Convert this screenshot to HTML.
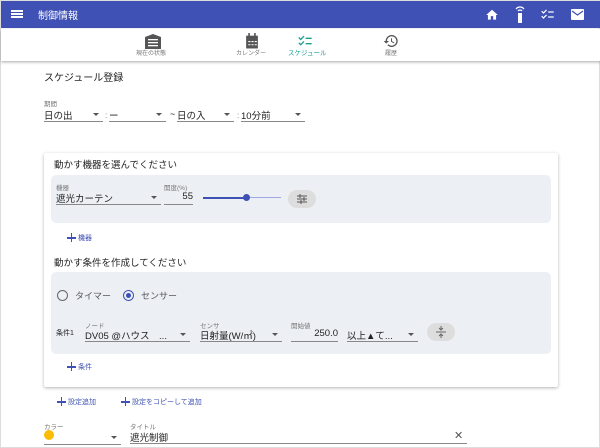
<!DOCTYPE html>
<html><head><meta charset="utf-8"><style>
*{box-sizing:border-box;margin:0;padding:0}
body{width:600px;height:448px;overflow:hidden;background:#fff;font-family:"Liberation Sans","Noto Sans CJK JP",sans-serif;color:#222;position:relative;border:1px solid #ddd}
.a{position:absolute;white-space:nowrap}
.hdr{left:0;top:0;width:600px;height:27px;background:#3f51b5}
.tabs{left:0;top:28px;width:600px;height:32px;background:#fff;box-shadow:0 1px 3px rgba(0,0,0,.35)}
.lbl{font-size:6.5px;color:#777}
.sel{font-size:9.5px;border-bottom:1px solid #888;height:14px}
.arr{position:absolute;right:4px;top:5px;width:0;height:0;border-left:3px solid transparent;border-right:3px solid transparent;border-top:3px solid #555}
.card{left:43px;top:152px;width:514px;height:234px;background:#fff;box-shadow:0 1px 3px rgba(0,0,0,.3);border-radius:2px}
.pan{background:#eceff4;border-radius:5px}
.blue{color:#3f51b5;font-size:7px}
.plus{position:absolute;width:9px;height:9px}
.plus:before{content:"";position:absolute;left:0;top:4px;width:9px;height:1.5px;background:#3f51b5}
.plus:after{content:"";position:absolute;left:3.75px;top:0;width:1.5px;height:9px;background:#3f51b5}
.pill{background:#ddd;border-radius:9px;width:28px;height:18px}
</style></head><body>
<div class="a hdr"></div>
<div class="a" style="left:10px;top:9px;width:12px;height:2px;background:#fff;box-shadow:0 3px 0 #fff,0 6px 0 #fff"></div>
<div class="a" style="left:37px;top:6px;color:#fff;font-size:10px">制御情報</div>
<svg class="a" style="left:484px;top:7px" width="14" height="14" viewBox="0 0 24 24"><path d="M10 20v-6h4v6h5v-8h3L12 3 2 12h3v8z" fill="#fff"/></svg>
<svg class="a" style="left:514px;top:5px" width="10" height="17" viewBox="0 0 10 17"><path d="M1 3a5 5 0 0 1 8 0M3 5a2.5 2.5 0 0 1 4 0" stroke="#fff" fill="none" stroke-width="1.2"/><rect x="3" y="7" width="4" height="10" fill="#fff"/></svg>
<svg class="a" style="left:539px;top:6px" width="15" height="15" viewBox="0 0 24 24"><path d="M22 7h-9v2h9V7zm0 8h-9v2h9v-2zM5.54 11L2 7.46l1.41-1.41 2.12 2.12 4.24-4.24 1.41 1.41L5.54 11zm0 8L2 15.46l1.41-1.41 2.12 2.12 4.24-4.24 1.41 1.41L5.54 19z" fill="#fff"/></svg>
<svg class="a" style="left:570px;top:8px" width="13" height="11" viewBox="0 0 13 11"><rect width="13" height="11" rx="1" fill="#fff"/><path d="M1 2l5.5 4L12 2" stroke="#3f51b5" fill="none" stroke-width="1.2"/></svg>
<div class="a tabs"></div>
<svg class="a" style="left:143px;top:32px" width="18" height="16" viewBox="0 0 18 16"><path d="M1 4L9 1l8 3v12H1z" fill="#555"/><rect x="4" y="6" width="10" height="1.3" fill="#fff"/><rect x="4" y="9" width="10" height="1.3" fill="#fff"/><rect x="4" y="12" width="10" height="1.3" fill="#fff"/></svg>
<div class="a lbl" style="left:135px;top:47px;font-size:6px">現在の状態</div>
<svg class="a" style="left:244px;top:32px" width="14" height="16" viewBox="0 0 13 15"><rect x="1" y="2.5" width="11" height="12" fill="#555"/><rect x="3" y="0" width="1.5" height="3" fill="#555"/><rect x="8.5" y="0" width="1.5" height="3" fill="#555"/><path d="M3 8h2M6 8h2M9 8h2M3 11h2M6 11h2M9 11h2" stroke="#fff"/></svg>
<div class="a lbl" style="left:235px;top:47px;font-size:6px">カレンダー</div>
<svg class="a" style="left:296px;top:32px" width="16" height="16" viewBox="0 0 24 24"><path d="M22 7h-9v2h9V7zm0 8h-9v2h9v-2zM5.54 11L2 7.46l1.41-1.41 2.12 2.12 4.24-4.24 1.41 1.41L5.54 11zm0 8L2 15.46l1.41-1.41 2.12 2.12 4.24-4.24 1.41 1.41L5.54 19z" fill="#1a9e8f"/></svg>
<div class="a" style="left:287px;top:46px;font-size:6.5px;color:#1a9e8f">スケジュール</div>
<svg class="a" style="left:382px;top:32px" width="16" height="16" viewBox="0 0 24 24"><path d="M13 3a9 9 0 0 0-9 9H1l3.9 3.9L9 12H6a7 7 0 1 1 2 4.9l-1.4 1.4A9 9 0 1 0 13 3zm-1 5v5l4.3 2.5.7-1.2-3.5-2.1V8z" fill="#555"/></svg>
<div class="a lbl" style="left:384px;top:47px;font-size:6px">履歴</div>
<div class="a" style="left:43px;top:68px;font-size:10px">スケジュール登録</div>
<div class="a lbl" style="left:43px;top:97px">期間</div>
<div class="a sel" style="left:43px;top:107px;width:59px">日の出<span class="arr"></span></div>
<div class="a" style="left:104px;top:110px;font-size:8px;color:#777">:</div>
<div class="a sel" style="left:108px;top:107px;width:57px">ー<span class="arr"></span></div>
<div class="a" style="left:169px;top:108px;font-size:9px">~</div>
<div class="a sel" style="left:176px;top:107px;width:57px">日の入<span class="arr"></span></div>
<div class="a" style="left:236px;top:110px;font-size:8px;color:#777">:</div>
<div class="a sel" style="left:240px;top:107px;width:64px">10分前<span class="arr"></span></div>
<div class="a card"></div>
<div class="a" style="left:53px;top:156px;font-size:9.5px">動かす機器を選んでください</div>
<div class="a pan" style="left:50px;top:174px;width:500px;height:48px"></div>
<div class="a lbl" style="left:55px;top:181px">機器</div>
<div class="a sel" style="left:55px;top:190px;width:105px">遮光カーテン<span class="arr"></span></div>
<div class="a lbl" style="left:163px;top:181px">開度(%)</div>
<div class="a sel" style="left:163px;top:190px;width:29px;text-align:right">55</div>
<div class="a" style="left:202px;top:196px;width:44px;height:1.5px;background:#3f51b5"></div>
<div class="a" style="left:246px;top:196px;width:34px;height:1px;background:#9fa8e0"></div>
<div class="a" style="left:242px;top:193px;width:7px;height:7px;border-radius:50%;background:#3f51b5"></div>
<div class="a pill" style="left:287px;top:189px"></div>
<svg class="a" style="left:295px;top:193px" width="12" height="10" viewBox="0 0 12 10"><path d="M1 2h10M1 5h10M1 8h10M4 0v4M8 3v4M5 6v4" stroke="#555" stroke-width="1"/></svg>
<div class="plus" style="left:66px;top:232px"></div><div class="a blue" style="left:77px;top:232px">機器</div>
<div class="a" style="left:53px;top:254px;font-size:9.5px">動かす条件を作成してください</div>
<div class="a pan" style="left:50px;top:271px;width:500px;height:82px"></div>
<div class="a" style="left:56px;top:289px;width:11px;height:11px;border:1.3px solid #666;border-radius:50%"></div>
<div class="a" style="left:74px;top:288px;font-size:9px;color:#555">タイマー</div>
<div class="a" style="left:122px;top:289px;width:11px;height:11px;border:1.3px solid #3f51b5;border-radius:50%"></div>
<div class="a" style="left:125px;top:292px;width:5px;height:5px;background:#3f51b5;border-radius:50%"></div>
<div class="a" style="left:140px;top:288px;font-size:9px;color:#555">センサー</div>
<div class="a" style="left:55px;top:327px;font-size:7px">条件1</div>
<div class="a lbl" style="left:84px;top:319px">ノード</div>
<div class="a sel" style="left:84px;top:327px;width:105px">DV05 @ハウス　...<span class="arr"></span></div>
<div class="a lbl" style="left:199px;top:319px">センサ</div>
<div class="a sel" style="left:199px;top:327px;width:82px">日射量(W/㎡)<span class="arr"></span></div>
<div class="a lbl" style="left:290px;top:319px">開始値</div>
<div class="a sel" style="left:290px;top:327px;width:47px;text-align:right">250.0</div>
<div class="a sel" style="left:346px;top:327px;width:71px">以上▲て...<span class="arr"></span></div>
<div class="a pill" style="left:426px;top:322px"></div>
<svg class="a" style="left:434px;top:324px" width="12" height="14" viewBox="0 0 12 14"><path d="M1 7h10M6 1v4M4 3l2 2 2-2M6 13V9M4 11l2-2 2 2" stroke="#666" fill="none" stroke-width="1"/></svg>
<div class="plus" style="left:66px;top:361px"></div><div class="a blue" style="left:77px;top:361px">条件</div>
<div class="plus" style="left:56px;top:396px"></div><div class="a blue" style="left:67px;top:396px">設定追加</div>
<div class="plus" style="left:120px;top:396px"></div><div class="a blue" style="left:131px;top:396px">設定をコピーして追加</div>
<div class="a lbl" style="left:43px;top:420px">カラー</div>
<div class="a" style="left:43px;top:429px;width:10px;height:10px;border-radius:50%;background:#fbbc05"></div>
<div class="a sel" style="left:43px;top:430px;width:77px;height:14px;border-bottom-color:#888"><span class="arr"></span></div>
<div class="a lbl" style="left:129px;top:420px">タイトル</div>
<div class="a sel" style="left:129px;top:429px;width:337px">遮光制御</div>
<div class="a" style="left:453px;top:428px;font-size:11px;color:#555">✕</div>
</body></html>
